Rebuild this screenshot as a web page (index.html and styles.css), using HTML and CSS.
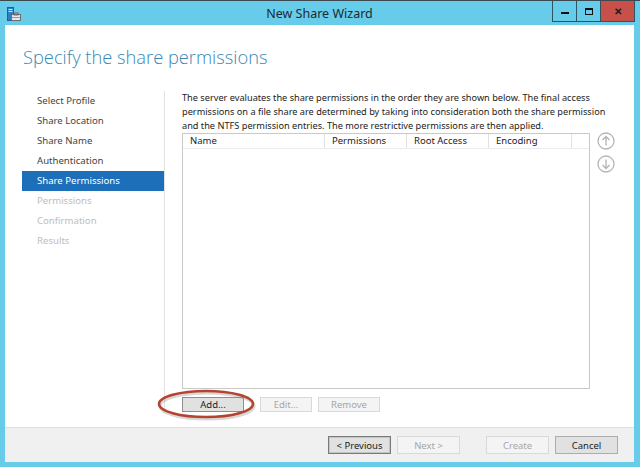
FILE: index.html
```html
<!DOCTYPE html>
<html lang="en">
<head>
    <meta charset="UTF-8">
    <title>New Share Wizard</title>
    <link rel="stylesheet" href="styles.css">
</head>
<body>
    <div class="window">
        <div class="titlebar">
            <svg class="app-icon" width="14" height="15" viewBox="0 0 14 15">
                <rect x="0.5" y="0.5" width="6" height="13" fill="#2c7fc4" stroke="#1d5f9a"/>
                <rect x="1.5" y="2" width="4" height="1" fill="#cfe6f7"/>
                <rect x="1.5" y="4" width="4" height="1" fill="#cfe6f7"/>
                <rect x="4.5" y="7.5" width="9" height="6" fill="#e8e8e8" stroke="#6d6d6d"/>
                <rect x="7" y="6" width="4" height="2" fill="none" stroke="#6d6d6d"/>
                <rect x="5" y="10" width="8" height="1" fill="#9a9a9a"/>
            </svg>
            <div class="title">New Share Wizard</div>
            <div class="caption-buttons">
                <div class="cap-btn"><span class="glyph-min"></span></div>
                <div class="cap-btn"><span class="glyph-max"></span></div>
                <div class="cap-btn close">&#x2715;</div>
            </div>
        </div>

        <div class="client">
            <div class="main">
                <h1>Specify the share permissions</h1>

                <div class="body">
                    <ul class="steps">
                        <li>Select Profile</li>
                        <li>Share Location</li>
                        <li>Share Name</li>
                        <li>Authentication</li>
                        <li class="current">Share Permissions</li>
                        <li class="disabled">Permissions</li>
                        <li class="disabled">Confirmation</li>
                        <li class="disabled">Results</li>
                    </ul>

                    <div class="page">
                        <p class="intro">The server evaluates the share permissions in the order they are shown below. The final access<br>permissions on a file share are determined by taking into consideration both the share permission<br>and the NTFS permission entries. The more restrictive permissions are then applied.</p>

                        <div class="list-row">
                            <div class="grid">
                                <div class="grid-head">
                                    <div class="col col-name">Name</div>
                                    <div class="col col-perm">Permissions</div>
                                    <div class="col col-root">Root Access</div>
                                    <div class="col col-enc">Encoding</div>
                                    <div class="col col-rest"></div>
                                </div>
                            </div>
                            <div class="order-buttons">
                                <svg width="18" height="18" viewBox="0 0 18 18">
                                    <circle cx="9" cy="9" r="8" fill="none" stroke="#b4b4b4" stroke-width="1.3"/>
                                    <path d="M9 13.5V4.5M5.5 8L9 4.5L12.5 8" fill="none" stroke="#b4b4b4" stroke-width="1.3"/>
                                </svg>
                                <svg width="18" height="18" viewBox="0 0 18 18">
                                    <circle cx="9" cy="9" r="8" fill="none" stroke="#b4b4b4" stroke-width="1.3"/>
                                    <path d="M9 4.5V13.5M5.5 10L9 13.5L12.5 10" fill="none" stroke="#b4b4b4" stroke-width="1.3"/>
                                </svg>
                            </div>
                        </div>

                        <div class="list-actions">
                            <button class="btn btn-add">Add...</button>
                            <button class="btn btn-edit" disabled>Edit...</button>
                            <button class="btn" disabled>Remove</button>
                            <svg class="highlight" width="104" height="36" viewBox="0 0 104 36">
                                <ellipse cx="52" cy="19" rx="47" ry="13" fill="none" stroke="#8c8c8c" stroke-opacity="0.35" stroke-width="3"/>
                                <ellipse cx="51" cy="17" rx="47" ry="13" fill="none" stroke="#b5432f" stroke-width="2.5"/>
                            </svg>
                        </div>
                    </div>
                </div>
            </div>

            <div class="footer">
                <button class="btn btn-default">&lt; Previous</button>
                <button class="btn" disabled>Next &gt;</button>
                <button class="btn btn-create" disabled>Create</button>
                <button class="btn">Cancel</button>
            </div>
        </div>
    </div>
</body>
</html>
```

FILE: styles.css
```css
body {
    margin: 0;
    padding: 0;
    font-family: "Noto Sans", "Open Sans", sans-serif;
    background-color: #67cbea;
}

.window {
    width: 640px;
    height: 467px;
    box-sizing: border-box;
    border-top: 1px solid #3c4a50;
    background-color: #67cbea;
    padding: 0 6px 5px 5px;
    display: flex;
    flex-direction: column;
}

/* title bar */

.titlebar {
    height: 24px;
    display: flex;
    align-items: flex-start;
    position: relative;
}

.app-icon {
    margin: 6px 0 0 2px;
}

.title {
    position: absolute;
    left: 0;
    right: 0;
    top: 4px;
    text-align: center;
    font-size: 12.5px;
    color: #1e2a30;
}

.caption-buttons {
    margin-left: auto;
    margin-right: -1px;
    display: flex;
    position: relative;
    z-index: 1;
}

.cap-btn {
    width: 23px;
    height: 20px;
    border: 1px solid #2f5563;
    border-top: none;
    margin-left: -1px;
    display: flex;
    align-items: center;
    justify-content: center;
    box-sizing: content-box;
}

.cap-btn.close {
    width: 33px;
    background-color: #c7514a;
    color: #1a1a1a;
    font-size: 10px;
    font-weight: bold;
}

.glyph-min {
    width: 8px;
    height: 2px;
    margin-top: 4px;
    background-color: #111;
}

.glyph-max {
    width: 6px;
    height: 4px;
    border: 1px solid #111;
    border-top-width: 2px;
}

/* client area */

.client {
    flex: 1;
    background-color: #fff;
    display: flex;
    flex-direction: column;
}

.main {
    flex: 1;
}

h1 {
    margin: 18px 0 0 18px;
    font-family: "Open Sans", sans-serif;
    font-weight: 300;
    font-size: 18.3px;
    line-height: 27px;
    color: #3a88b3;
}

.body {
    display: flex;
    margin-top: 21px;
}

.steps {
    list-style: none;
    margin: 0 0 0 17px;
    padding: 0;
    width: 142px;
    height: 319px;
    font-size: 9.6px;
}

.steps li {
    height: 20px;
    line-height: 20px;
    padding-left: 15px;
    color: #444;
}

.steps li.current {
    background-color: #1c6fb8;
    color: #fff;
}

.steps li.disabled {
    color: #bdbdbd;
}

.page {
    border-left: 1px solid #e2e2e2;
    padding-left: 17px;
    flex: 1;
}

.intro {
    margin: 0;
    white-space: nowrap;
    font-size: 9.2px;
    line-height: 14px;
    color: #222;
}

.list-row {
    display: flex;
}

.grid {
    width: 406px;
    height: 254px;
    border: 1px solid #c9c9c9;
}

.grid-head {
    display: flex;
    height: 14px;
    border-bottom: 1px solid #ececec;
    font-size: 9.5px;
    line-height: 14px;
    color: #222;
}

.col {
    padding-left: 7px;
    box-sizing: border-box;
    border-right: 1px solid #e2e2e2;
}

.col-name { width: 142px; }
.col-perm { width: 82px; }
.col-root { width: 82px; }
.col-enc { width: 83px; }
.col-rest { width: 17px; border-right: none; }

.order-buttons {
    display: flex;
    flex-direction: column;
    gap: 5px;
    margin: -1px 0 0 7px;
}

/* buttons */

.btn {
    font-family: "Noto Sans", "Open Sans", sans-serif;
    font-size: 9.5px;
    height: 16px;
    padding: 0;
    border: 1px solid #adadad;
    background-color: #e1e1e1;
    color: #222;
    line-height: 13px;
}

.btn:disabled {
    border-color: #d9d9d9;
    background-color: #f4f4f4;
    color: #a6a6a6;
}

.list-actions {
    display: flex;
    margin-top: 8px;
    position: relative;
}

.list-actions .btn {
    width: 62px;
    height: 15px;
}

.list-actions .btn-edit {
    width: 52px;
    margin-left: 16px;
}

.list-actions .btn + .btn + .btn {
    margin-left: 6px;
}

.btn-add {
    border-color: #8e8e8e;
}

.highlight {
    position: absolute;
    left: -27px;
    top: -10px;
}

.footer {
    height: 35px;
    box-sizing: border-box;
    border-top: 1px solid #dfdfdf;
    background-color: #f0f0f0;
    display: flex;
    align-items: center;
    justify-content: flex-end;
    padding-right: 16px;
}

.footer .btn {
    width: 63px;
    height: 18px;
    margin-left: 6px;
}

.footer .btn-create {
    margin-left: 26px;
}

.btn-default {
    border: 1px solid #7a7a7a;
    box-shadow: inset 0 0 0 1px #c4c4c4;
}
```
